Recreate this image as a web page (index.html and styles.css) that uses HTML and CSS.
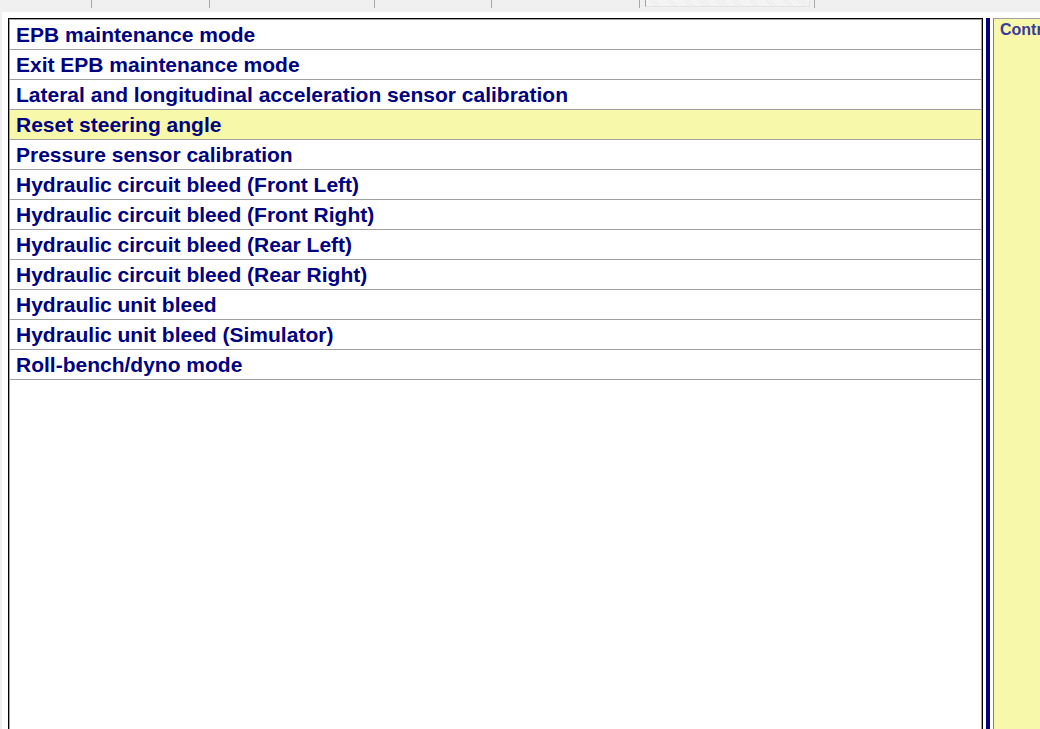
FILE: index.html
```html
<!DOCTYPE html>
<html lang="en">
<head>
    <meta charset="UTF-8">
    <title>Service functions</title>
    <link rel="stylesheet" href="styles.css">
</head>
<body>
    <div class="tabs">
        <div class="tab" style="width: 92px"></div>
        <div class="tab" style="width: 118px"></div>
        <div class="tab" style="width: 165px"></div>
        <div class="tab" style="width: 117px"></div>
        <div class="tab" style="width: 148px"></div>
        <div class="tab tab-active"></div>
        <div class="tab" style="width: 5px"></div>
    </div>
    <div class="main">
        <div class="list">
            <div class="list-inner">
                <div class="row">EPB maintenance mode</div>
                <div class="row">Exit EPB maintenance mode</div>
                <div class="row">Lateral and longitudinal acceleration sensor calibration</div>
                <div class="row selected">Reset steering angle</div>
                <div class="row">Pressure sensor calibration</div>
                <div class="row">Hydraulic circuit bleed (Front Left)</div>
                <div class="row">Hydraulic circuit bleed (Front Right)</div>
                <div class="row">Hydraulic circuit bleed (Rear Left)</div>
                <div class="row">Hydraulic circuit bleed (Rear Right)</div>
                <div class="row">Hydraulic unit bleed</div>
                <div class="row">Hydraulic unit bleed (Simulator)</div>
                <div class="row">Roll-bench/dyno mode</div>
            </div>
        </div>
        <div class="splitter"></div>
        <div class="info">
            <div class="info-title">Control</div>
        </div>
    </div>
</body>
</html>
```

FILE: styles.css
```css
html, body {
    margin: 0;
    height: 100%;
    overflow: hidden;
}
body {
    font-family: 'Liberation Sans', Arial, sans-serif;
    background-color: #f0f0f0;
    display: flex;
    flex-direction: column;
}
.tabs {
    height: 12px;
    display: flex;
    flex-shrink: 0;
}
.tab {
    height: 8px;
    border-right: 1px solid #a8a8a8;
    box-sizing: border-box;
    flex-shrink: 0;
}
.tab-active {
    width: 165px;
    height: 7px;
    margin-left: 5px;
    border: 1px solid #a0a0a0;
    border-top: none;
    border-right-color: #e4e4e4;
    border-bottom-color: #e4e4e4;
    background: repeating-linear-gradient(45deg, #f8f8f8 0 1px, #ececec 1px 2px);
}
.main {
    flex: 1;
    margin-left: 2px;
    background: #fff;
    padding: 6px 0 0 6px;
    display: flex;
    min-height: 0;
}
.list {
    width: 975px;
    border: 1px solid #000;
    border-bottom: none;
    box-sizing: border-box;
    flex-shrink: 0;
}
.list-inner {
    border: 1px solid #a0a0a0;
    border-bottom: none;
    height: 100%;
    box-sizing: border-box;
}
.row {
    height: 29px;
    line-height: 30px;
    padding-left: 6px;
    border-bottom: 1px solid #a0a0a0;
    font-size: 21px;
    font-weight: bold;
    color: #000080;
    white-space: nowrap;
}
.row.selected {
    background-color: #f8f8aa;
}
.splitter {
    width: 4px;
    margin: 0 3px;
    background-color: #000080;
    flex-shrink: 0;
}
.info {
    flex: 1;
    background-color: #f8f8aa;
    border-left: 1px solid #808080;
    border-top: 1px solid #a0a0a0;
    padding: 2px 0 0 6px;
    overflow: hidden;
}
.info-title {
    font-size: 12pt;
    font-weight: bold;
    color: #3a3a98;
    white-space: nowrap;
}
```
